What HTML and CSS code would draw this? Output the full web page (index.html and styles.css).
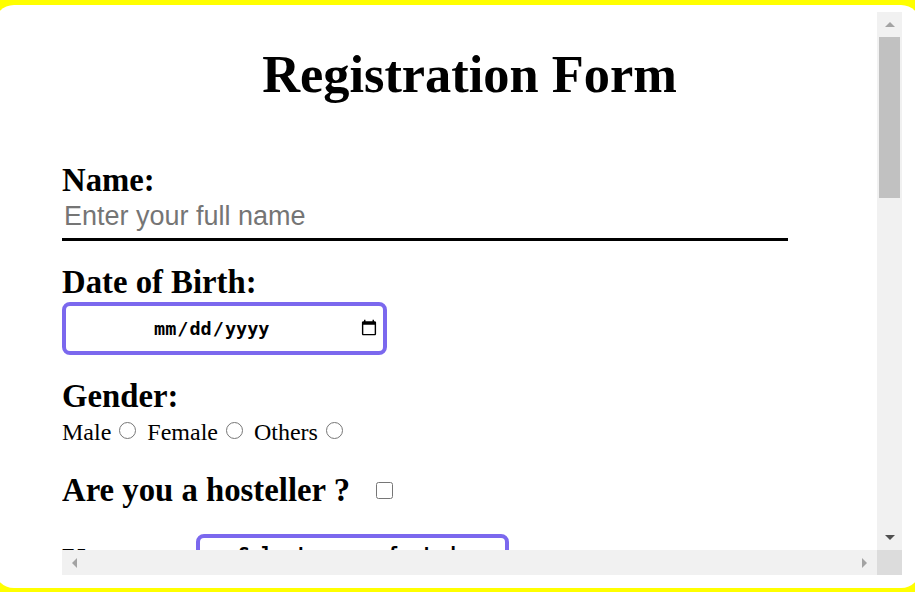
FILE: index.html
```html
<!DOCTYPE html>
<html lang="en">
<head>
<meta charset="utf-8">
<title>Registration Form</title>
<link rel="stylesheet" href="styles.css">
</head>
<body>
<div class="card">
  <div class="frame">
    <div class="viewport">
      <h1 class="title">Registration Form</h1>
      <form class="form">
        <div class="field">
          <label class="label" for="name">Name:</label>
          <input class="text-input" id="name" type="text" placeholder="Enter your full name">
        </div>
        <div class="field">
          <label class="label" for="dob">Date of Birth:</label>
          <input class="date-input" id="dob" type="date">
        </div>
        <div class="field">
          <div class="label">Gender:</div>
          <div class="radios">Male <input class="radio" type="radio" name="g"> Female <input class="radio" type="radio" name="g"> Others <input class="radio" type="radio" name="g"></div>
        </div>
        <div class="field row">
          <label class="label" for="hostel">Are you a hosteller ?</label>
          <input class="check" id="hostel" type="checkbox">
        </div>
        <div class="field row">
          <label class="label" for="year">Year:</label>
          <select class="select" id="year">
            <option>Select year of study</option>
          </select>
        </div>
      </form>
    </div>
    <div class="vscroll">
      <div class="sb-btn"><svg width="10" height="5" viewBox="0 0 10 5"><polygon points="0,5 5,0 10,5" fill="#a3a3a3"/></svg></div>
      <div class="thumb"></div>
      <div class="sb-fill"></div>
      <div class="sb-btn"><svg width="10" height="5" viewBox="0 0 10 5"><polygon points="0,0 10,0 5,5" fill="#505050"/></svg></div>
    </div>
    <div class="hscroll">
      <div class="sb-btn"><svg width="5" height="10" viewBox="0 0 5 10"><polygon points="5,0 5,10 0,5" fill="#a3a3a3"/></svg></div>
      <div class="sb-fill"></div>
      <div class="sb-btn"><svg width="5" height="10" viewBox="0 0 5 10"><polygon points="0,0 5,5 0,10" fill="#a3a3a3"/></svg></div>
    </div>
    <div class="corner"></div>
  </div>
</div>
</body>
</html>
```
FILE: styles.css
```css
html {
  background: #ffff00;
}
body {
  margin: 0;
  overflow: hidden;
  height: 592px;
}
.card {
  margin: 5px -6px 0 -6px;
  height: 583px;
  background: #ffffff;
  border-radius: 20px;
  padding: 7px 19px 0 68px;
  box-sizing: border-box;
}
.frame {
  display: grid;
  grid-template-columns: 815px 25px;
  grid-template-rows: 538px 25px;
  width: 840px;
  height: 563px;
}
.viewport {
  overflow: hidden;
  font-family: "Liberation Serif", "Times New Roman", serif;
  color: #000;
}
.title {
  margin: 32px 0 0;
  font-size: 52.4px;
  line-height: 60px;
  font-weight: bold;
  text-align: center;
}
.form {
  margin-top: 58px;
}
.field {
  margin-top: 23px;
}
.field:first-child {
  margin-top: 0;
}
.label {
  display: block;
  font-size: 32.75px;
  line-height: 37px;
  font-weight: bold;
}
.text-input {
  display: block;
  width: 726px;
  box-sizing: border-box;
  margin: 0;
  padding: 3px 2px 7px;
  border: none;
  border-bottom: 3px solid #000;
  outline: none;
  font-family: "Liberation Sans", Arial, sans-serif;
  font-size: 27px;
  line-height: 29px;
  color: #000;
  background: transparent;
}
.text-input::placeholder {
  color: #757575;
}
.date-input {
  display: block;
  margin: 1px 0 0;
  width: 325px;
  height: 53px;
  box-sizing: border-box;
  border: 4px solid #7b68ee;
  border-radius: 8px;
  padding: 0 3px 0 0;
  font-family: "DejaVu Sans Mono", "Liberation Mono", monospace;
  font-weight: bold;
  font-size: 18.5px;
  text-align: center;
  background: #fff;
  color: #000;
}
.radios {
  margin-top: 1px;
  font-size: 24px;
  line-height: 33px;
}
.radio {
  width: 17px;
  height: 17px;
  margin: 0 5px 0 2px;
  vertical-align: 1px;
}
.row {
  display: flex;
  align-items: center;
}
.check {
  width: 17px;
  height: 17px;
  margin: 0 0 0 26px;
}
.row .select {
  align-self: flex-start;
  margin: 2px 0 0 58px;
  width: 313px;
  box-sizing: border-box;
  border: 4px solid #7b68ee;
  border-radius: 8px;
  padding: 5px 10px 20px;
  font-family: "DejaVu Sans Mono", "Liberation Mono", monospace;
  font-weight: bold;
  font-size: 19px;
  line-height: 22px;
  text-align: center;
  background: #fff;
  color: #000;
  appearance: none;
}
.vscroll {
  background: #f1f1f1;
  display: flex;
  flex-direction: column;
}
.hscroll {
  background: #f1f1f1;
  display: flex;
}
.sb-btn {
  flex: 0 0 25px;
  display: flex;
  align-items: center;
  justify-content: center;
}
.sb-btn svg {
  display: block;
}
.thumb {
  height: 161px;
  margin: 0 2px;
  background: #c1c1c1;
}
.sb-fill {
  flex: 1;
}
.corner {
  background: #dcdcdc;
}
```
